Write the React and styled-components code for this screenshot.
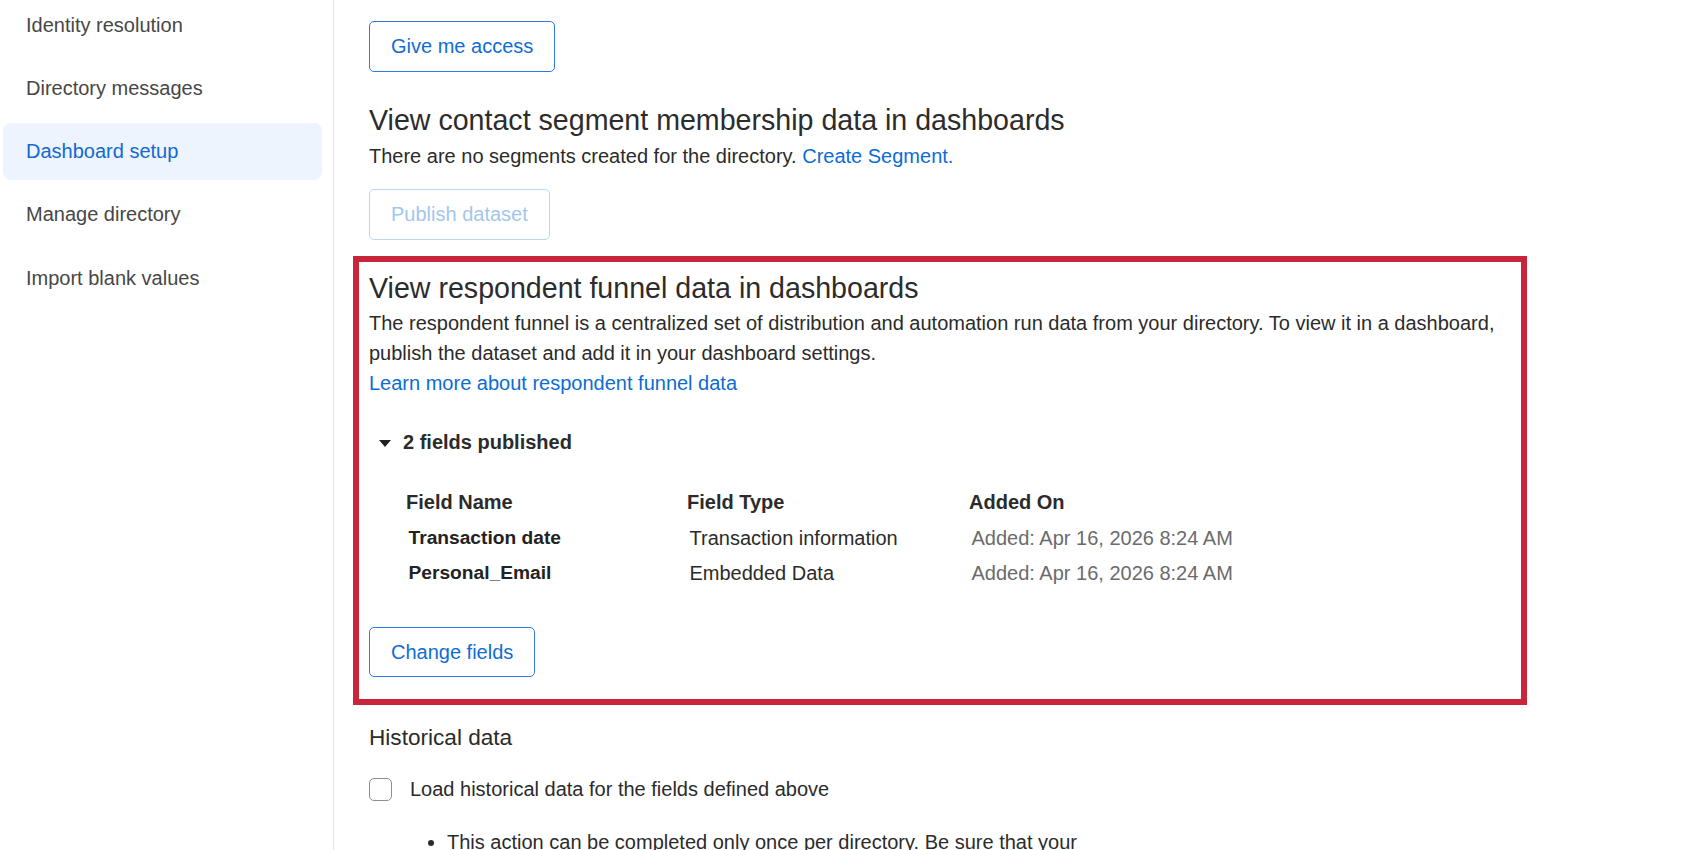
import styled, { createGlobalStyle } from "styled-components";

const GlobalStyle = createGlobalStyle`
  html, body {
    margin: 0;
    padding: 0;
    background: #fff;
    font-family: "Liberation Sans", Arial, sans-serif;
    color: #2b2b2b;
  }
`;

const navItems = [
  "Identity resolution",
  "Directory messages",
  "Dashboard setup",
  "Manage directory",
  "Import blank values",
];

const fields = [
  { name: "Transaction date", type: "Transaction information", added: "Added: Apr 16, 2026 8:24 AM" },
  { name: "Personal_Email", type: "Embedded Data", added: "Added: Apr 16, 2026 8:24 AM" },
];

const App = () => {
  return (
    <>
      <GlobalStyle />
      <Page>
        <Sidebar>
          <NavList>
            {navItems.map((item) => (
              <NavItem key={item} $active={item === "Dashboard setup"}>
                {item}
              </NavItem>
            ))}
          </NavList>
        </Sidebar>

        <Main>
          <Content>
            <OutlineButton>Give me access</OutlineButton>

            <SectionTitle $top={30}>View contact segment membership data in dashboards</SectionTitle>
            <Text>
              There are no segments created for the directory. <Link>Create Segment.</Link>
            </Text>
            <OutlineButton $disabled $top={18}>Publish dataset</OutlineButton>

            <FunnelBox>
              <SectionTitle>View respondent funnel data in dashboards</SectionTitle>
              <Text>
                The respondent funnel is a centralized set of distribution and automation run data from your
                directory. To view it in a dashboard, publish the dataset and add it in your dashboard settings.
              </Text>
              <Link $block>Learn more about respondent funnel data</Link>

              <Toggle>
                <Caret />
                2 fields published
              </Toggle>

              <FieldTable>
                <HeadCell>Field Name</HeadCell>
                <HeadCell>Field Type</HeadCell>
                <HeadCell>Added On</HeadCell>
                {fields.map((f) => [
                  <NameCell key={f.name + "n"}>{f.name}</NameCell>,
                  <TypeCell key={f.name + "t"}>{f.type}</TypeCell>,
                  <DateCell key={f.name + "d"}>{f.added}</DateCell>,
                ])}
              </FieldTable>

              <OutlineButton $top={39} $height={50}>Change fields</OutlineButton>
            </FunnelBox>

            <SubTitle>Historical data</SubTitle>
            <CheckRow>
              <CheckBox />
              <span>Load historical data for the fields defined above</span>
            </CheckRow>
            <Notes>
              <li>
                This action can be completed only once per directory. Be sure that your fields are set up
                correctly before loading historical data.
              </li>
            </Notes>
          </Content>
        </Main>
      </Page>
    </>
  );
};

const Page = styled.div`
  display: flex;
  height: 850px;
  overflow: hidden;
  background: #fff;
`;

const Sidebar = styled.nav`
  width: 334px;
  flex-shrink: 0;
  border-right: 1px solid #e4e4e4;
  padding: 0 11px 0 3px;
  box-sizing: border-box;
`;

const NavList = styled.div`
  display: flex;
  flex-direction: column;
  gap: 6.3px;
  margin-top: -3.5px;
`;

const NavItem = styled.div`
  height: 57px;
  display: flex;
  align-items: center;
  padding-left: 23px;
  border-radius: 8px;
  font-size: 20px;
  color: ${(p) => (p.$active ? "#1468d2" : "#474747")};
  background: ${(p) => (p.$active ? "#edf4fd" : "transparent")};
`;

const Main = styled.main`
  flex: 1;
  padding: 21px 0 0 35px;
`;

const Content = styled.div`
  width: 1142px;
  display: flex;
  flex-direction: column;
  align-items: flex-start;
`;

const OutlineButton = styled.button`
  height: ${(p) => p.$height || 51}px;
  margin-top: ${(p) => p.$top || 0}px;
  padding: 0 21px;
  background: #fff;
  border: 1px solid ${(p) => (p.$disabled ? "#bcd6f3" : "#2f7bd9")};
  border-radius: 5px;
  font-family: "Liberation Sans", Arial, sans-serif;
  font-size: 20px;
  color: ${(p) => (p.$disabled ? "#a3c6ef" : "#0f6dd4")};
  cursor: ${(p) => (p.$disabled ? "default" : "pointer")};
`;

const SectionTitle = styled.h2`
  margin: ${(p) => p.$top || 0}px 0 0;
  font-size: 28.6px;
  line-height: 36px;
  font-weight: 400;
  color: #2c2c2c;
`;

const Text = styled.p`
  margin: 3px 0 0;
  font-size: 20px;
  line-height: 30px;
  color: #2b2b2b;
`;

const Link = styled.a`
  color: #0d6cd4;
  font-size: 20px;
  line-height: 30px;
  cursor: pointer;
  display: ${(p) => (p.$block ? "block" : "inline")};
`;

const FunnelBox = styled.section`
  width: 1174px;
  box-sizing: border-box;
  margin: 16px 0 0 -16px;
  border: 6px solid #c8243a;
  padding: 8px 10px 22px;
  display: flex;
  flex-direction: column;
  align-items: flex-start;

  ${Text} {
    margin-top: 2px;
  }
`;

const Toggle = styled.div`
  margin-top: 29px;
  height: 30px;
  display: flex;
  align-items: center;
  gap: 12px;
  padding-left: 10px;
  font-size: 20px;
  font-weight: 700;
  color: #2b2b2b;
`;

const Caret = styled.span`
  width: 0;
  height: 0;
  border-left: 6.5px solid transparent;
  border-right: 6.5px solid transparent;
  border-top: 7px solid #222;
  margin-top: 2px;
`;

const FieldTable = styled.div`
  margin-top: 30px;
  padding-left: 37px;
  display: grid;
  grid-template-columns: 281px 282px auto;
  row-gap: 5.5px;
  font-size: 20px;
  line-height: 30px;
`;

const HeadCell = styled.div`
  font-weight: 700;
  color: #2b2b2b;
`;

const NameCell = styled.div`
  padding-left: 2.5px;
  font-weight: 700;
  font-size: 19.2px;
  color: #222;
`;

const TypeCell = styled.div`
  padding-left: 2.5px;
  color: #2b2b2b;
`;

const DateCell = styled.div`
  padding-left: 2.5px;
  color: #6b6b6b;
`;

const SubTitle = styled.h3`
  margin: 18px 0 0;
  font-size: 22.6px;
  line-height: 30px;
  font-weight: 400;
  color: #2b2b2b;
`;

const CheckRow = styled.label`
  margin-top: 21px;
  height: 30px;
  display: flex;
  align-items: center;
  gap: 18px;
  font-size: 20px;
  color: #2b2b2b;
`;

const CheckBox = styled.span`
  width: 23px;
  height: 23px;
  box-sizing: border-box;
  border: 1.5px solid #8e8e8e;
  border-radius: 5px;
  background: #fff;
`;

const Notes = styled.ul`
  margin: 23px 0 0 41px;
  padding-left: 37px;
  width: 660px;
  font-size: 20px;
  line-height: 30px;
  color: #2b2b2b;
`;

export default App;
